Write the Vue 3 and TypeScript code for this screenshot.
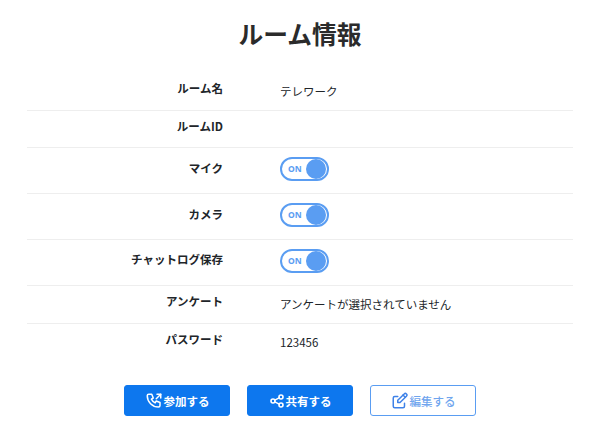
<script setup lang="ts">
interface Row { label: string; value?: string; toggle?: boolean }
const rows: Row[] = [
  { label: 'ルーム名', value: 'テレワーク' },
  { label: 'ルームID', value: '' },
  { label: 'マイク', toggle: true },
  { label: 'カメラ', toggle: true },
  { label: 'チャットログ保存', toggle: true },
  { label: 'アンケート', value: 'アンケートが選択されていません' },
  { label: 'パスワード', value: '123456' },
]
</script>

<template>
  <main class="page">
    <h1 class="title">ルーム情報</h1>
    <dl class="table">
      <div v-for="r in rows" :key="r.label" class="row" :class="{ 'row-toggle': r.toggle }">
        <dt class="label">{{ r.label }}</dt>
        <dd class="value">
          <span v-if="r.toggle" class="toggle">
            <span class="on">ON</span>
            <span class="knob"></span>
          </span>
          <template v-else>{{ r.value }}</template>
        </dd>
      </div>
    </dl>
    <div class="actions">
      <button class="btn primary">
        <svg width="18" height="18" viewBox="0 0 24 24" fill="none" stroke="currentColor" stroke-width="2" stroke-linecap="round" stroke-linejoin="round">
          <path d="M5 3h4l2 5-2.5 1.5a11 11 0 0 0 5 5L15 12l5 2v4a2 2 0 0 1-2 2A15 15 0 0 1 3 5a2 2 0 0 1 2-2" />
          <path d="M15 9l6-6" /><path d="M16 3h5v5" />
        </svg>
        参加する
      </button>
      <button class="btn primary">
        <svg width="16" height="16" viewBox="0 0 24 24" fill="none" stroke="currentColor" stroke-width="2.4" stroke-linecap="round" stroke-linejoin="round">
          <circle cx="6" cy="12" r="3" /><circle cx="18" cy="6" r="3" /><circle cx="18" cy="18" r="3" />
          <path d="M8.7 10.7l6.6-3.4" /><path d="M8.7 13.3l6.6 3.4" />
        </svg>
        共有する
      </button>
      <button class="btn outline">
        <svg class="edit" width="18" height="18" viewBox="0 0 24 24" fill="none" stroke="currentColor" stroke-width="2" stroke-linecap="round" stroke-linejoin="round">
          <path d="M9 6H5a2 2 0 0 0-2 2v11a2 2 0 0 0 2 2h11a2 2 0 0 0 2-2v-4" />
          <path d="M20.6 5.6a2.1 2.1 0 0 0-3-3L9 11v3h3z" /><path d="M16 4l3 3" />
        </svg>
        編集する
      </button>
    </div>
  </main>
</template>

<style>
html, body { margin: 0; background: #fff; }
</style>

<style scoped>
.page {
  width: 600px;
  height: 430px;
  box-sizing: border-box;
  padding: 15px 27px 0;
  font-family: "Noto Sans CJK JP", "Noto Sans", sans-serif;
  color: #212529;
  overflow: hidden;
}
.title {
  margin: 0;
  height: 36px;
  line-height: 36px;
  font-size: 24.75px;
  font-weight: 700;
  text-align: center;
  color: #2b2b2b;
}
.table { margin: 22px 0 0; }
.row {
  display: flex;
  align-items: center;
  height: 37px;
  box-sizing: content-box;
  border-bottom: 1px solid #eeeeee;
}
.row-toggle { height: 45px; }
.row:nth-child(2) { height: 36px; }
.row:last-child { border-bottom: 0; }
.label {
  width: 196px;
  text-align: right;
  font-size: 11.5px;
  font-weight: 700;
  color: #212529;
  position: relative;
  top: -4px;
}
.row-toggle .label,
.row:nth-child(2) .label { top: -3px; }
.row:nth-child(5) .label { top: -4px; }
.value {
  margin: 0 0 0 57px;
  font-size: 11.5px;
  display: flex;
  align-items: center;
  position: relative;
  top: -1px;
}
.toggle {
  width: 49px;
  height: 24px;
  box-sizing: border-box;
  border: 2px solid #5a9df2;
  border-radius: 12px;
  display: flex;
  align-items: center;
  justify-content: space-between;
  padding: 0 1px 0 6px;
  margin-bottom: 2px;
}
.on {
  font-size: 8.5px;
  font-weight: 700;
  color: #5a9df2;
  font-family: "Noto Sans", sans-serif;
}
.knob {
  width: 20px;
  height: 20px;
  border-radius: 50%;
  background: #5a9df2;
}
.actions {
  display: flex;
  justify-content: center;
  gap: 17px;
  margin-top: 24px;
}
.btn {
  width: 106px;
  height: 31px;
  box-sizing: border-box;
  display: flex;
  align-items: center;
  justify-content: center;
  gap: 1px;
  font-family: inherit;
  font-size: 11.5px;
  font-weight: 700;
  border-radius: 3px;
  padding: 0;
}
.primary {
  background: #0d77ee;
  border: 1px solid #0d77ee;
  color: #fff;
}
.outline {
  background: #fff;
  border: 1px solid #5a9df2;
  color: #6fa5ee;
  font-weight: 500;
}
.edit { color: #3f82e8; }
</style>
